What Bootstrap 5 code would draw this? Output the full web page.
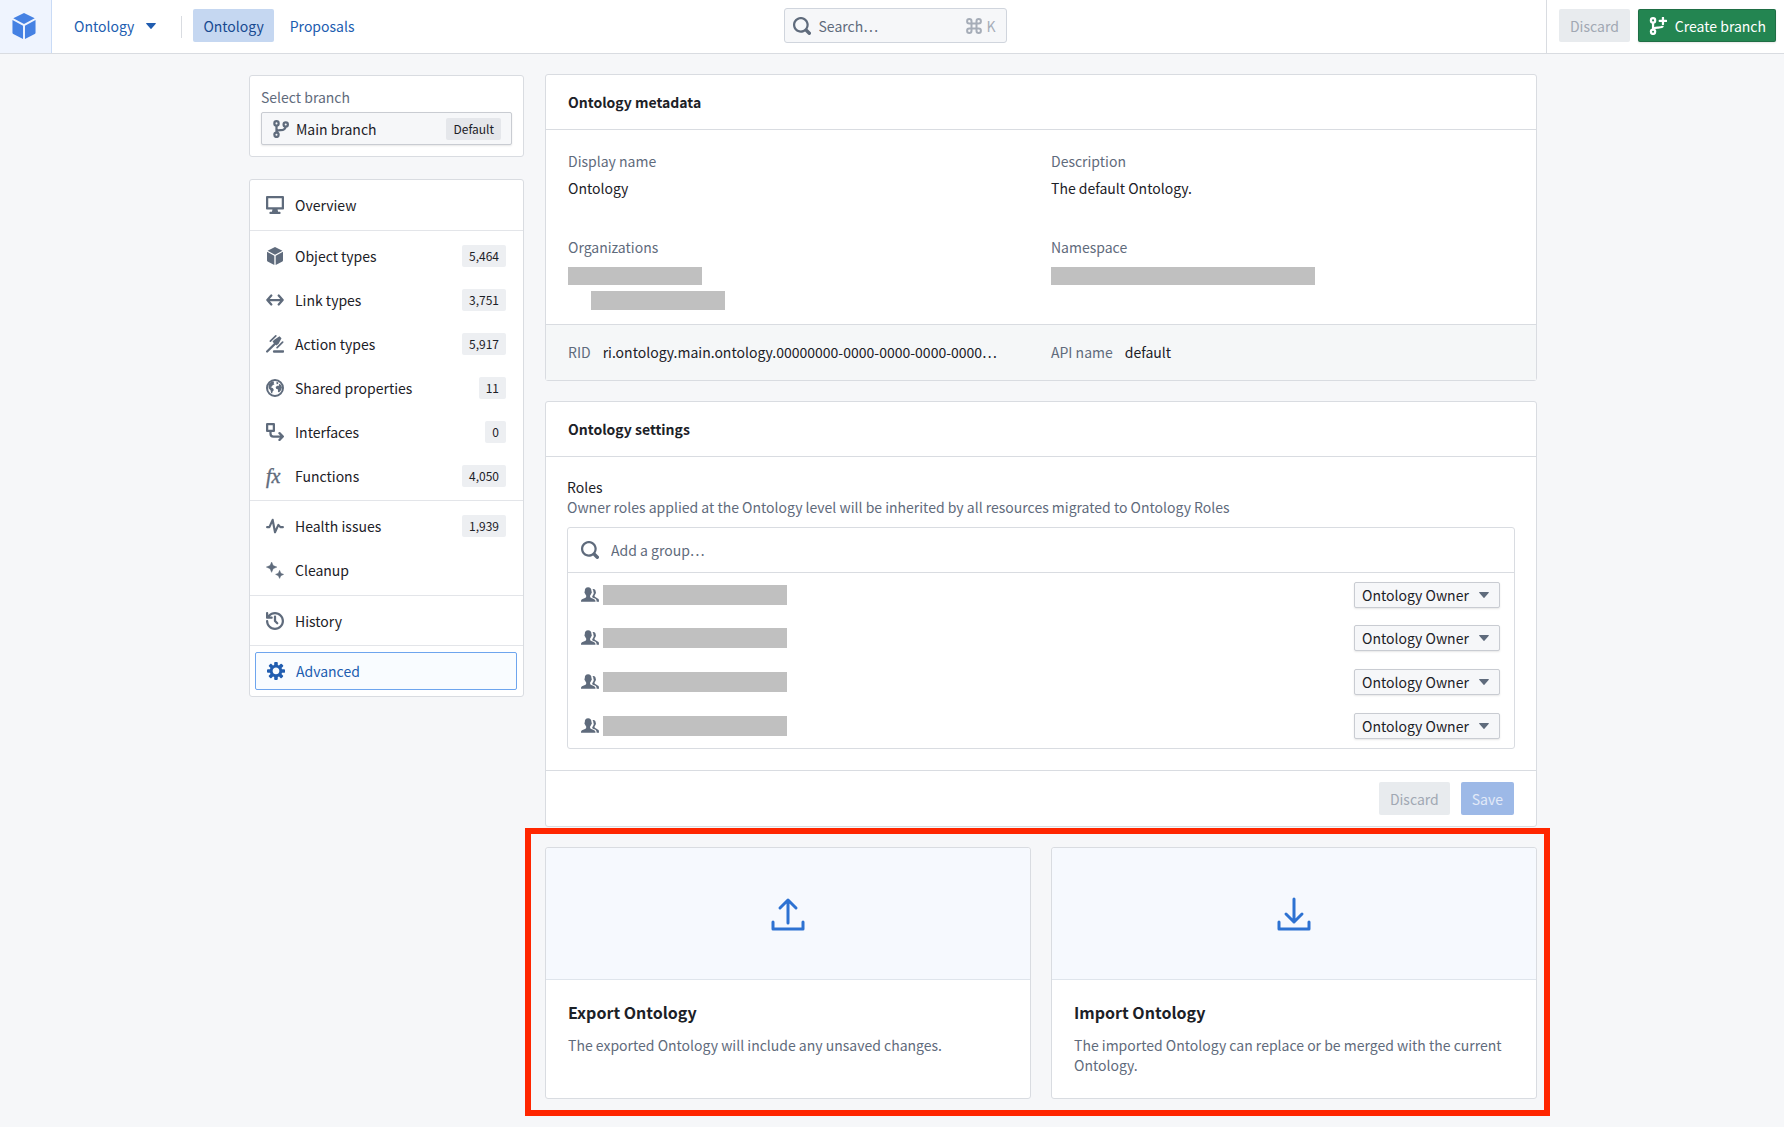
<!DOCTYPE html>
<html lang="en">
<head>
<meta charset="utf-8">
<meta name="viewport" content="width=device-width, initial-scale=1">
<title>Ontology</title>
<link href="https://cdn.jsdelivr.net/npm/bootstrap@5.3.0/dist/css/bootstrap.min.css" rel="stylesheet">
<style>
  :root { --ink:#1c2127; --muted:#5f6b7c; --line:#d9dce1; --soft:#f6f7f9; --blue:#215db0; }
  body { background:var(--soft); color:var(--ink); font:14px/20px "Noto Sans CJK SC","Noto Sans",sans-serif; }
  h1,h2,p,dl,dd,dt,ul { margin:0; padding:0; font-weight:400; font-size:14px; line-height:20px; }
  svg { display:block; flex:none; }
  .ico { width:18px; height:18px; color:var(--muted); fill:currentColor; }
  .muted { color:var(--muted); }

  .topbar { height:54px; background:#fff; border-bottom:1px solid var(--line); }
  .topbar > div { flex:1 1 0; }
  .topbar .btn-flat, .topbar .find { margin-bottom:2px; }
  .brand { width:52px; padding:0 0 2px 11px; background:#eff4fe; border-right:1px solid #c9dbf6; }
  .brand svg { width:26px; height:28px; color:#4581e3; }
  .btn-flat { height:33px; padding:0 11px; border:0; border-radius:2px; font-size:14px; line-height:20px; color:var(--blue); display:flex; align-items:center; }
  .btn-flat.active { background:#c5d7f1; color:#184a90; }
  .btn-off, .btn-off:disabled { background:#e8ebee; color:#a1a8b3; opacity:1; }
  .btn-save, .btn-save:disabled { background:#9db9e7; color:#e2eaf8; opacity:1; }
  .btn-new, .btn-new:hover { background:#238551; color:#fff; box-shadow:inset 0 0 0 1px rgba(17,20,24,.2), 0 1px 2px rgba(17,20,24,.1); padding:0 10px 0 11px; }
  .btn-new .ico { color:#fff; }
  .picker { margin-left:6px; padding:0 16px; }
  .views { gap:6px; }
  .views .btn-flat { padding:0 10px; }
  .v-line { width:1px; background:var(--line); }
  .v-short { height:22px; margin:0 11px 0 9px; }
  .find { width:223px; height:35px; margin-left:14px; background:var(--soft); border:1px solid #d0d5dd; border-radius:3px; padding:0 10px 0 8px; color:#a6adb8; }
  .bare { border:0; background:none; outline:0; padding:0; min-width:0; flex:1; font-size:14px; line-height:20px; color:var(--ink); }
  .bare::placeholder { color:var(--muted); opacity:1; }

  .page { max-width:1290px; padding:20px 0 22px 2px; gap:21px; }
  .side { width:275px; padding-top:1px; gap:22px; }
  .panel { background:#fff; border:1px solid var(--line); border-radius:3px; }
  .branch { padding:11px; }
  .branch label { margin-bottom:5px; }
  .branch-btn { height:33px; gap:6px; padding:0 10px; background:var(--soft); border:1px solid #c9ccd2; border-radius:2px; box-shadow:0 1px 2px rgba(17,20,24,.1); color:var(--ink); font-size:14px; line-height:20px; }
  .tag { background:#edeff2; border-radius:2px; height:22px; padding:0 7px; font-size:12px; line-height:22px; color:var(--ink); }
  .tag-dark { background:#e5e7eb; }
  .nav-group { padding:3px 0; list-style:none; }
  .nav-group + .nav-group { border-top:1px solid #e3e5e9; }
  .nav-group:nth-child(even) { padding-bottom:2px; }
  .nav-item-row { height:44px; padding:0 17px 0 16px; gap:11px; color:var(--ink); text-decoration:none; }
  .nav-item-row.current { height:38px; margin:3px 6px 3px 5px; padding:0 11px; background:#f9fcff; border:1px solid #6ea5ee; border-radius:2px; color:var(--blue); }
  .nav-item-row.current .ico { color:var(--blue); }
  .fx { width:18px; font:italic 20px/18px "Liberation Serif",serif; color:var(--muted); -webkit-text-stroke:.4px currentColor; }

  .content { gap:20px; min-width:0; }
  .panel-head { height:55px; padding:0 22px 1px; border-bottom:1px solid var(--line); }
  .panel-head h2 { font-weight:600; }
  .pair { display:grid; grid-template-columns:1fr 1fr; column-gap:20px; padding:0 22px; }
  .meta { padding-top:21px; padding-bottom:14px; row-gap:39px; }
  .meta dd { margin-top:7px; }
  .meta dd.hidden-value { margin-top:10px; }
  .redact { background:#c0c0c0; height:18px; }
  .w-org { width:134px; }
  .w-space { width:264px; }
  .w-role { width:184px; height:20px; }
  .org-2 { margin:6px 0 0 23px; height:19px; }
  .meta-foot { height:56px; padding-bottom:2px; background:#f5f7f8; border-top:1px solid var(--line); align-items:center; }
  .roles { padding:21px 21px 21px; }
  .roles h2 { line-height:19px; }
  .roles p { margin-bottom:10px; }
  .role-box { border:1px solid var(--line); border-radius:3px; }
  .role-row { height:44px; padding:0 14px 0 13px; }
  .role-row.first { border-top:1px solid var(--line); }
  .role-select { width:146px; height:26px; padding:0 26px 0 7px; border:1px solid #c9ccd2; border-radius:2px; color:var(--ink); font-size:14px; line-height:20px; box-shadow:0 1px 2px rgba(17,20,24,.1);
    background:var(--soft) url("data:image/svg+xml,%3Csvg xmlns='http://www.w3.org/2000/svg' viewBox='0 0 10 6'%3E%3Cpath fill='%235f6b7c' d='M.6 0h8.8c.4 0 .6.5.4.8L5.4 5.7c-.2.3-.6.3-.8 0L.2.8C-.1.5.1 0 .6 0z'/%3E%3C/svg%3E") no-repeat right 10px center / 10px 6px; }
  .panel-foot { padding:11px 22px; border-top:1px solid var(--line); gap:11px; }

  .transfer { display:grid; grid-template-columns:1fr 1fr; gap:20px; }
  .marker { position:absolute; inset:-19px -13px -17px -20px; border:6px solid #ff2600; pointer-events:none; }
  .hero { height:132px; background:#f6f9fe; border-bottom:1px solid #dfe5ec; color:#2d72d2; border-radius:3px 3px 0 0; }
  .hero svg { width:34px; height:34px; fill:none; stroke:currentColor; stroke-width:3; stroke-linecap:round; stroke-linejoin:round; }
  .transfer-body { padding:21px 22px 22px; min-height:118px; }
  .transfer-body h2 { font-size:16px; line-height:22px; font-weight:600; margin-bottom:12px; }
</style>
<script src="https://cdn.jsdelivr.net/npm/bootstrap@5.3.0/dist/js/bootstrap.bundle.min.js" defer></script>
</head>
<body>
<svg width="0" height="0" class="position-absolute" aria-hidden="true">
  <symbol id="i-cube" viewBox="0 0 16 16"><path d="M8 0l6.600 3.300L8 6.800 1.400 3.300zM.9 4.300l6.500 3.500V16L1.400 12.900a.9.900 0 01-.5-.8zM15.100 4.300v7.800a.9.900 0 01-.5.8L8.600 16V7.800z"/></symbol>
  <symbol id="i-caret" viewBox="0 0 10 6"><path d="M.6 0h8.800c.4 0 .6.5.4.8L5.400 5.700c-.2.3-.6.3-.8 0L.2.8C-.1.5.1 0 .6 0z"/></symbol>
  <symbol id="i-search" viewBox="0 0 16 16"><path d="M15.550 13.430l-2.670-2.680a6.940 6.940 0 001.110-3.760c0-3.870-3.130-7-7-7s-7 3.130-7 7 3.130 7 7 7c1.390 0 2.680-.42 3.760-1.110l2.680 2.670a1.498 1.498 0 102.120-2.120zm-8.560-1.440c-2.760 0-5-2.240-5-5s2.240-5 5-5 5 2.240 5 5-2.240 5-5 5z"/></symbol>
  <symbol id="i-branch" viewBox="0 0 16 16"><g fill="none" stroke="currentColor" stroke-width="2"><circle cx="4" cy="3" r="1.900"/><circle cx="4" cy="13.200" r="1.900"/><circle cx="12.200" cy="4" r="1.900"/><path d="M4 5v6.200M12 6c-.2 3-2.500 3-4.500 3.100C5.500 9.200 4.200 9.500 4 11"/></g></symbol>
  <symbol id="i-newbranch" viewBox="0 0 16 16"><g fill="none" stroke="currentColor" stroke-width="2"><circle cx="3.600" cy="3" r="1.900"/><circle cx="3.600" cy="13.200" r="1.900"/><path d="M3.600 5v6.200M12.300 8c-.4 1.300-2.500 1.300-4.500 1.400C5.500 9.500 3.800 9.700 3.600 11"/><path d="M12.400.6v5.800M9.500 3.500h5.800" stroke-linecap="round"/></g></symbol>
  <symbol id="i-desktop" viewBox="0 0 16 16"><path d="M15 0H1C.45 0 0 .45 0 1v10c0 .55.45 1 1 1h4.750l-.5 2H4c-.55 0-1 .45-1 1s.45 1 1 1h8c.55 0 1-.45 1-1s-.45-1-1-1h-1.250l-.5-2H15c.55 0 1-.45 1-1V1c0-.55-.45-1-1-1zm-1 10H2V2h12v8z"/></symbol>
  <symbol id="i-link" viewBox="0 0 16 16"><path d="M1.500 8h13M4.700 4L1.200 8l3.500 4M11.300 4l3.500 4-3.500 4" fill="none" stroke="currentColor" stroke-width="2" stroke-linecap="round" stroke-linejoin="round"/></symbol>
  <symbol id="i-gavel" viewBox="0 0 16 16"><path d="M7.200 13.500h7.900a.8.800 0 010 2.200H7.200a.8.800 0 010-2.200z"/><path d="M7 4.500l5-3.300 1.800 1.600-2.600 5-1.900 1.500-3.500-3.300z"/><path d="M1 14.700L8.800 7" fill="none" stroke="currentColor" stroke-width="2" stroke-linecap="round"/><path d="M3.900 5.500L8.700.8M9.900 11.300l4.900-5" fill="none" stroke="currentColor" stroke-width="1.500" stroke-linecap="round"/></symbol>
  <symbol id="i-globe" viewBox="0 0 16 16"><circle cx="8" cy="8" r="7.100" fill="none" stroke="currentColor" stroke-width="1.800"/><path d="M2.500 4.500L5.500 2l1.700.4-.4 1.400.7 1-1.500.6-.7 1.300-1.400.3 2.300 1.300.8 1.400-1.200 1.600-.3 1.600-1-.5-.5-2.500-1.700-1.600zM9.300 2.500l1.800.7-.4 1.300-1.300.2zM11.500 4.200l1.700.9 1 2.400-.9 2.600-1.700 1.800-1-.5.1-2.100-1.700-.7-.4-1.600 1.400-1.100 1.500.1z"/></symbol>
  <symbol id="i-flow" viewBox="0 0 16 16"><g fill="none" stroke="currentColor" stroke-width="2" stroke-linecap="round" stroke-linejoin="round"><rect x="1" y="1" width="6" height="6"/><path d="M4 8v1.500c0 1.700.9 2.500 2.600 2.500H14M12 9l3 3-3 3"/></g></symbol>
  <symbol id="i-pulse" viewBox="0 0 16 16"><path d="M1 9h2L5.900 2.500 8 13.500 11 7l1.800 2H15" fill="none" stroke="currentColor" stroke-width="1.900" stroke-linecap="round" stroke-linejoin="round"/></symbol>
  <symbol id="i-clean" viewBox="0 0 16 16"><path d="M5 .9l1.400 3.200 3.300 1.300-3.300 1.400L5 10.100 3.600 6.800.3 5.400l3.300-1.300zM12.100 8.300l1.100 2.500 2.500 1.100-2.500 1.100-1.100 2.500-1.100-2.500-2.500-1.100 2.500-1.100z" stroke="currentColor" stroke-width=".4"/></symbol>
  <symbol id="i-history" viewBox="0 0 16 16"><path d="M8 3c-.55 0-1 .45-1 1v4c0 .28.11.53.29.71l2 2a1.003 1.003 0 001.420-1.420L9 7.590V4c0-.55-.45-1-1-1zm0-3a7.950 7.950 0 00-6 2.740V1c0-.55-.45-1-1-1S0 .45 0 1v4c0 .55.45 1 1 1h4c.55 0 1-.45 1-1s-.45-1-1-1H3.540C4.640 2.780 6.230 2 8 2c3.310 0 6 2.690 6 6s-2.690 6-6 6-6-2.690-6-6c0-.55-.45-1-1-1s-1 .45-1 1c0 4.420 3.580 8 8 8s8-3.580 8-8-3.580-8-8-8z"/></symbol>
  <symbol id="i-cog" viewBox="0 0 16 16"><path d="M15.190 6.390h-1.850c-.11-.37-.27-.71-.45-1.040l1.360-1.360c.31-.31.31-.82 0-1.130l-1.130-1.130a.803.803 0 00-1.130 0l-1.360 1.360c-.33-.17-.67-.33-1.040-.44V.79c0-.44-.36-.8-.8-.8h-1.600c-.44 0-.8.36-.8.8v1.860c-.39.12-.75.28-1.100.47l-1.300-1.300c-.3-.3-.79-.3-1.090 0L1.820 2.910c-.3.3-.3.79 0 1.090l1.300 1.300c-.2.34-.36.7-.48 1.090H.79c-.44 0-.8.36-.8.8v1.600c0 .44.36.8.8.8h1.850c.11.37.27.71.45 1.040l-1.360 1.360c-.31.31-.31.82 0 1.130l1.130 1.130c.31.31.82.31 1.130 0l1.360-1.360c.33.18.67.33 1.040.44v1.860c0 .44.36.8.8.8h1.600c.44 0 .8-.36.8-.8v-1.860c.39-.12.75-.28 1.100-.47l1.300 1.300c.3.3.79.3 1.090 0l1.090-1.090c.3-.3.3-.79 0-1.090l-1.300-1.300c.19-.35.36-.71.48-1.100h1.850c.44 0 .8-.36.8-.8v-1.600a.816.816 0 00-.81-.79zm-7.200 4.600c-1.660 0-3-1.340-3-3s1.340-3 3-3 3 1.340 3 3-1.340 3-3 3z"/></symbol>
  <symbol id="i-people" viewBox="0 0 16 16"><path d="M6.300 1.200c1.900 0 3.100 1.300 3 3.300 0 .5.400.7.300 1.300-.1.600-.5.700-.6 1-.2.800-.6 1.300-.9 1.600v1.300c.4.900 2.600 1.400 3.900 2.200.8.500.9 1.300.9 2.100H0c0-.8.100-1.700.9-2.200 1.200-.8 3.300-1.200 3.700-2.100V8.400c-.3-.3-.7-.8-.9-1.600-.1-.3-.5-.4-.6-1-.1-.6.300-.8.300-1.300-.1-2 1-3.300 2.900-3.300z"/><path d="M10.200 2.700c1.700-.4 3 .6 2.900 2.500 0 .4.300.6.200 1-.1.500-.4.600-.5.900-.1.600-.5 1-.7 1.200v1.100c.3.700 2.200 1.300 3.200 1.900.7.400.7 1.900.7 2.700h-2.100c0-1.500-.4-2.300-1.400-2.900-.9-.5-1.900-.8-2.500-1.200v-.8c.4-.4.500-.9.700-1.300.5-.4.700-1.100.6-1.900-.2-.4-.3-.7-.3-1.100 0-.8-.3-1.500-.8-2.100z"/></symbol>
  <symbol id="i-cmd" viewBox="0 0 16 16"><path d="M5.500 5.500h5v5h-5zM5.500 5.500H3.300a2.200 2.200 0 112.200-2.200zM10.500 5.500V3.300a2.200 2.200 0 112.200 2.200zM10.500 10.500h2.200a2.200 2.200 0 11-2.200 2.200zM5.500 10.500v2.200a2.200 2.200 0 11-2.200-2.200z" fill="none" stroke="currentColor" stroke-width="2"/></symbol>
</svg>

<header class="topbar d-flex">
  <div class="d-flex align-items-center">
    <a href="#" class="brand d-flex align-items-center align-self-stretch" aria-label="Home"><svg fill="currentColor"><use href="#i-cube"/></svg></a>
    <button type="button" class="btn btn-flat picker"><span class="me-2 pe-1">Ontology</span><svg width="10" height="6" fill="currentColor"><use href="#i-caret"/></svg></button>
    <span class="v-line v-short"></span>
    <nav class="views d-flex" aria-label="Views">
      <a href="#" class="btn btn-flat active" aria-current="page">Ontology</a>
      <a href="#" class="btn btn-flat">Proposals</a>
    </nav>
  </div>
  <label class="find d-flex align-items-center align-self-center">
    <svg class="ico me-2"><use href="#i-search"/></svg>
    <input class="bare" type="search" placeholder="Search…" aria-label="Search">
    <svg class="ms-2 me-1" width="16" height="16"><use href="#i-cmd"/></svg><span>K</span>
  </label>
  <div class="d-flex justify-content-end align-items-center pe-2">
    <span class="v-line align-self-stretch me-2"></span>
    <button type="button" class="btn btn-flat btn-off ms-1 me-1" disabled>Discard</button>
    <button type="button" class="btn btn-flat btn-new ms-1"><svg class="ico me-2"><use href="#i-newbranch"/></svg>Create branch</button>
  </div>
</header>

<div class="page d-flex align-items-start mx-auto">
  <aside class="side d-flex flex-column flex-shrink-0">
    <section class="panel branch">
      <label class="muted d-block" for="branch">Select branch</label>
      <button type="button" id="branch" class="branch-btn d-flex align-items-center w-100">
        <svg class="ico"><use href="#i-branch"/></svg><span>Main branch</span><span class="tag tag-dark ms-auto">Default</span>
      </button>
    </section>
    <nav class="panel" aria-label="Ontology sections">
      <ul class="nav-group">
        <li><a href="#" class="nav-item-row d-flex align-items-center"><svg class="ico"><use href="#i-desktop"/></svg>Overview</a></li>
      </ul>
      <ul class="nav-group">
        <li><a href="#" class="nav-item-row d-flex align-items-center"><svg class="ico"><use href="#i-cube"/></svg>Object types<span class="tag ms-auto">5,464</span></a></li>
        <li><a href="#" class="nav-item-row d-flex align-items-center"><svg class="ico"><use href="#i-link"/></svg>Link types<span class="tag ms-auto">3,751</span></a></li>
        <li><a href="#" class="nav-item-row d-flex align-items-center"><svg class="ico"><use href="#i-gavel"/></svg>Action types<span class="tag ms-auto">5,917</span></a></li>
        <li><a href="#" class="nav-item-row d-flex align-items-center"><svg class="ico"><use href="#i-globe"/></svg>Shared properties<span class="tag ms-auto">11</span></a></li>
        <li><a href="#" class="nav-item-row d-flex align-items-center"><svg class="ico"><use href="#i-flow"/></svg>Interfaces<span class="tag ms-auto">0</span></a></li>
        <li><a href="#" class="nav-item-row d-flex align-items-center"><span class="fx" aria-hidden="true">fx</span>Functions<span class="tag ms-auto">4,050</span></a></li>
      </ul>
      <ul class="nav-group">
        <li><a href="#" class="nav-item-row d-flex align-items-center"><svg class="ico"><use href="#i-pulse"/></svg>Health issues<span class="tag ms-auto">1,939</span></a></li>
        <li><a href="#" class="nav-item-row d-flex align-items-center"><svg class="ico"><use href="#i-clean"/></svg>Cleanup</a></li>
      </ul>
      <ul class="nav-group">
        <li><a href="#" class="nav-item-row d-flex align-items-center"><svg class="ico"><use href="#i-history"/></svg>History</a></li>
      </ul>
      <ul class="nav-group">
        <li><a href="#" class="nav-item-row current d-flex align-items-center" aria-current="page"><svg class="ico"><use href="#i-cog"/></svg>Advanced</a></li>
      </ul>
    </nav>
  </aside>

  <main class="content d-flex flex-column flex-grow-1">
    <section class="panel">
      <div class="panel-head d-flex align-items-center"><h2>Ontology metadata</h2></div>
      <dl class="pair meta">
        <div><dt class="muted">Display name</dt><dd>Ontology</dd></div>
        <div><dt class="muted">Description</dt><dd>The default Ontology.</dd></div>
        <div><dt class="muted">Organizations</dt><dd class="hidden-value"><div class="redact w-org"></div><div class="redact w-org org-2"></div></dd></div>
        <div><dt class="muted">Namespace</dt><dd class="hidden-value"><div class="redact w-space"></div></dd></div>
      </dl>
      <div class="pair meta-foot">
        <div class="d-flex"><span class="muted me-2 pe-1">RID</span><span>ri.ontology.main.ontology.00000000-0000-0000-0000-0000…</span></div>
        <div class="d-flex"><span class="muted me-2 pe-1">API name</span><span>default</span></div>
      </div>
    </section>

    <section class="panel">
      <div class="panel-head d-flex align-items-center"><h2>Ontology settings</h2></div>
      <div class="roles">
        <h2>Roles</h2>
        <p class="muted">Owner roles applied at the Ontology level will be inherited by all resources migrated to Ontology Roles</p>
        <div class="role-box">
          <label class="role-row d-flex align-items-center"><svg class="ico me-2"><use href="#i-search"/></svg><input class="bare ps-1" type="text" placeholder="Add a group…" aria-label="Add a group"></label>
          <div class="role-row first d-flex align-items-center"><svg class="ico"><use href="#i-people"/></svg><span class="redact w-role ms-1 me-auto"></span><select class="role-select form-select" aria-label="Role of group 1"><option>Ontology Owner</option></select></div>
          <div class="role-row d-flex align-items-center"><svg class="ico"><use href="#i-people"/></svg><span class="redact w-role ms-1 me-auto"></span><select class="role-select form-select" aria-label="Role of group 2"><option>Ontology Owner</option></select></div>
          <div class="role-row d-flex align-items-center"><svg class="ico"><use href="#i-people"/></svg><span class="redact w-role ms-1 me-auto"></span><select class="role-select form-select" aria-label="Role of group 3"><option>Ontology Owner</option></select></div>
          <div class="role-row d-flex align-items-center"><svg class="ico"><use href="#i-people"/></svg><span class="redact w-role ms-1 me-auto"></span><select class="role-select form-select" aria-label="Role of group 4"><option>Ontology Owner</option></select></div>
        </div>
      </div>
      <div class="panel-foot d-flex justify-content-end">
        <button type="button" class="btn btn-flat btn-off" disabled>Discard</button>
        <button type="button" class="btn btn-flat btn-save" disabled>Save</button>
      </div>
    </section>

    <div class="transfer position-relative">
      <section class="panel">
        <div class="hero d-flex align-items-center justify-content-center"><svg viewBox="0 0 34 34"><path d="M17 26V3M9 11l8-8 8 8M2 25v7h30v-7"/></svg></div>
        <div class="transfer-body"><h2>Export Ontology</h2><p class="muted">The exported Ontology will include any unsaved changes.</p></div>
      </section>
      <section class="panel">
        <div class="hero d-flex align-items-center justify-content-center"><svg viewBox="0 0 34 34"><path d="M17 2v23M9 17l8 8 8-8M2 25v7h30v-7"/></svg></div>
        <div class="transfer-body"><h2>Import Ontology</h2><p class="muted">The imported Ontology can replace or be merged with the current Ontology.</p></div>
      </section>
      <div class="marker"></div>
    </div>
  </main>
</div>
</body>
</html>
